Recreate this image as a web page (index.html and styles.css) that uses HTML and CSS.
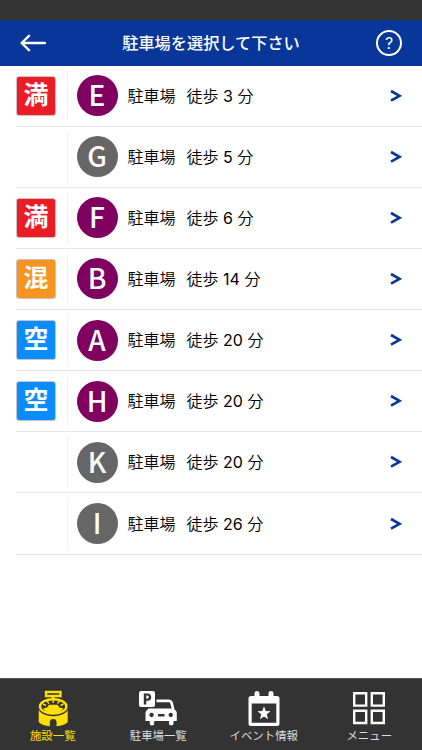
FILE: index.html
```html
<!DOCTYPE html>
<html lang="ja">

<head>
    <meta charset="UTF-8">
    <meta name="viewport" content="width=device-width, initial-scale=1.0">
    <title>駐車場を選択して下さい</title>
    <link rel="stylesheet" href="styles.css">
</head>

<body>
    <div class="status-bar"></div>
    <header class="header">
        <svg class="back" viewBox="0 0 26 18" width="26" height="18">
            <path d="M9 1.8 L1.6 9 L9 16.2 M1.8 9 H25" />
        </svg>
        <h1>駐車場を選択して下さい</h1>
        <div class="help">?</div>
    </header>

    <main>
        <ul class="list" id="parkingList">
            <!-- Rows are built from the parking data below -->
        </ul>
    </main>

    <nav class="tabs">
        <a class="tab active">
            <svg viewBox="0 0 32 38" width="32" height="38">
                <path class="line" d="M9 2 H23.5 V6 H9 Z" />
                <path class="fill" d="M14.5 6.5 H17.5 V10 H14.5 Z" />
                <ellipse class="line" cx="16.2" cy="16.4" rx="13.2" ry="7.2" />
                <path class="fill" d="M12 14.8 H20.5 L22.5 17.5 L26.5 18.5 Q23 23.2 16.2 23.2 T6 18.5 L10 17.5 Z" />
                <path class="spoke" d="M6 14 L9 15.5 M10 11 L12 13.5 M16.2 10 V13 M22.5 11 L20.5 13.5 M26.5 14 L23.5 15.5" />
                <path class="fill" d="M1.7 20 C4 24 10 26.2 16.2 26.2 S28.5 24 30.7 20 V32.2 Q27 35.8 19.6 36.2 V32.4 A3.4 3.4 0 0 0 12.8 32.4 V36.2 Q5.5 35.8 1.7 32.2 Z" />
            </svg>
            <span>施設一覧</span>
        </a>
        <a class="tab">
            <svg viewBox="0 0 38 38" width="38" height="38">
                <path class="fill" fill-rule="evenodd" d="M2 1 H14 Q16 1 16 3 V15 Q16 17 14 17 H2 Q0 17 0 15 V3 Q0 1 2 1 Z M4.8 3.4 V14.4 H7.3 V10.8 H8.6 C13.6 10.8 13.4 3.4 8.6 3.4 Z M7.3 5.6 H8.3 C10.3 5.6 10.3 8.7 8.3 8.7 H7.3 Z" />
                <path class="fill" fill-rule="evenodd" d="M17.5 9.5 H30 Q32.8 9.5 33.8 12.3 L35.5 19.5 Q37.8 20.5 37.8 23 V31 H34.5 V33.5 Q34.5 35.5 32.2 35.5 Q30 35.5 30 33.5 V31 H15.2 V33.5 Q15.2 35.5 13 35.5 Q10.8 35.5 10.8 33.5 V31 H6.5 V23 Q6.5 20.5 9 19.3 V18.5 H32.8 L31.2 13.2 Q31 12.2 30 12.2 H17.5 Z M12.5 22.8 A2.2 2.2 0 1 0 12.6 22.8 Z M31.7 22.8 A2.2 2.2 0 1 0 31.8 22.8 Z M19 24 H25.5 V26.4 H19 Z" />
            </svg>
            <span>駐車場一覧</span>
        </a>
        <a class="tab">
            <svg viewBox="0 0 32 38" width="32" height="38">
                <path class="fill" fill-rule="evenodd" d="M3 6 H6.5 V3.5 A2.5 2.5 0 0 1 11.5 3.5 V6 H20.5 V3.5 A2.5 2.5 0 0 1 25.5 3.5 V6 H29 Q31.5 6 31.5 8.5 V33.5 Q31.5 36 29 36 H3 Q.5 36 .5 33.5 V8.5 Q.5 6 3 6 Z M3.7 13.5 V32.8 H28.3 V13.5 Z" />
                <path class="fill" d="M16 16.3 L17.7 21.1 L22.6 21.2 L18.7 24.3 L20.1 29.2 L16 26.4 L11.9 29.2 L13.3 24.3 L9.4 21.2 L14.3 21.1 Z" />
            </svg>
            <span>イベント情報</span>
        </a>
        <a class="tab">
            <svg viewBox="0 0 32 38" width="32" height="38">
                <path class="line" d="M1.2 3.3 H13.2 V15.6 H1.2 Z M18.8 3.3 H30.8 V15.6 H18.8 Z M1.2 20.8 H13.2 V33 H1.2 Z M18.8 20.8 H30.8 V33 H18.8 Z" />
            </svg>
            <span>メニュー</span>
        </a>
    </nav>

    <script>
        const parkings = [
            { name: 'E', minutes: 3, open: true, status: 'full' },
            { name: 'G', minutes: 5, open: false },
            { name: 'F', minutes: 6, open: true, status: 'full' },
            { name: 'B', minutes: 14, open: true, status: 'busy' },
            { name: 'A', minutes: 20, open: true, status: 'empty' },
            { name: 'H', minutes: 20, open: true, status: 'empty' },
            { name: 'K', minutes: 20, open: false },
            { name: 'I', minutes: 26, open: false }
        ];
        const statusLabels = { full: '満', busy: '混', empty: '空' };
        const parkingList = document.getElementById('parkingList');

        parkings.forEach(p => {
            const row = document.createElement('li');
            row.className = 'row';
            row.innerHTML = `
                <div class="state">${p.status ? `<span class="badge ${p.status}">${statusLabels[p.status]}</span>` : ''}</div>
                <div class="circle ${p.open ? 'open' : ''}">${p.name}</div>
                <div class="text"><span class="place">駐車場</span><span>徒歩 <span class="num">${p.minutes}</span> 分</span></div>
                <svg class="arrow" viewBox="0 0 12 14" width="12" height="14"><path d="M1 2 L9.5 6.8 L1 11.6" /></svg>
            `;
            parkingList.appendChild(row);
        });
    </script>
</body>

</html>
```
FILE: styles.css
```css
* {
    box-sizing: border-box;
}

body {
    margin: 0;
    height: 100vh;
    display: flex;
    flex-direction: column;
    background-color: #fff;
    color: #000;
    font-family: Inter, "Noto Sans CJK JP", sans-serif;
    overflow: hidden;
}

.status-bar {
    height: 20px;
    background-color: #333;
}

.header {
    height: 45.5px;
    padding: 0 20px;
    display: flex;
    align-items: center;
    justify-content: space-between;
    background-color: #083799;
    color: #fff;
}

.header h1 {
    margin: 0;
    font-size: 16.2px;
    line-height: 24px;
    font-weight: 500;
}

.back {
    fill: none;
    stroke: #fff;
    stroke-width: 2.4;
    stroke-linecap: round;
    stroke-linejoin: round;
}

.help {
    width: 26px;
    height: 26px;
    border: 2px solid #fff;
    border-radius: 50%;
    font-size: 16px;
    line-height: 22px;
    text-align: center;
}

main {
    flex: 1;
}

.list {
    list-style: none;
    margin: 0;
    padding: 0 0 0 16px;
}

.row {
    height: 61.15px;
    display: flex;
    align-items: center;
    border-bottom: 1px solid #e6e6e8;
    padding-right: 20px;
}

.state {
    width: 52px;
    height: 50px;
    display: flex;
    align-items: center;
    border-right: 1px solid #eeeef3;
}

.badge {
    width: 40px;
    height: 40px;
    border: 1px solid #c9c4c6;
    border-radius: 3px;
    color: #fff;
    font-size: 25px;
    line-height: 37px;
    font-weight: 700;
    text-align: center;
}

.full {
    background-color: #ec1c24;
}

.busy {
    background-color: #f79421;
}

.empty {
    background-color: #0a8cff;
}

.circle {
    width: 41px;
    height: 41px;
    margin: 0 10px 0 8.5px;
    border-radius: 50%;
    background-color: #666;
    color: #fff;
    font-family: "Noto Sans CJK JP", sans-serif;
    font-size: 28px;
    line-height: 38px;
    font-weight: 500;
    text-align: center;
}

.circle.open {
    background-color: #800060;
}

.text {
    flex: 1;
    font-size: 16px;
    font-weight: 350;
    line-height: 24px;
}

.place {
    margin-right: 11px;
}

.num {
    font-weight: 400;
}

.arrow {
    fill: none;
    stroke: #083799;
    stroke-width: 2.6;
}

.tabs {
    height: 72px;
    display: flex;
    background-color: #333;
    border-top: 1px solid #555;
}

.tab {
    flex: 1;
    display: flex;
    flex-direction: column;
    align-items: center;
    padding-top: 11px;
    color: #ddd;
    font-size: 11.4px;
    line-height: 17px;
}

.tab.active {
    color: #ffe000;
}

.tab .fill {
    fill: #fff;
}

.tab .line {
    fill: none;
    stroke: #fff;
    stroke-width: 2.4;
}

.tab.active .fill {
    fill: #ffe000;
}

.tab.active .line {
    stroke: #ffe000;
}

.tab.active .spoke {
    fill: none;
    stroke: #ffe000;
    stroke-width: 1.4;
}
```
